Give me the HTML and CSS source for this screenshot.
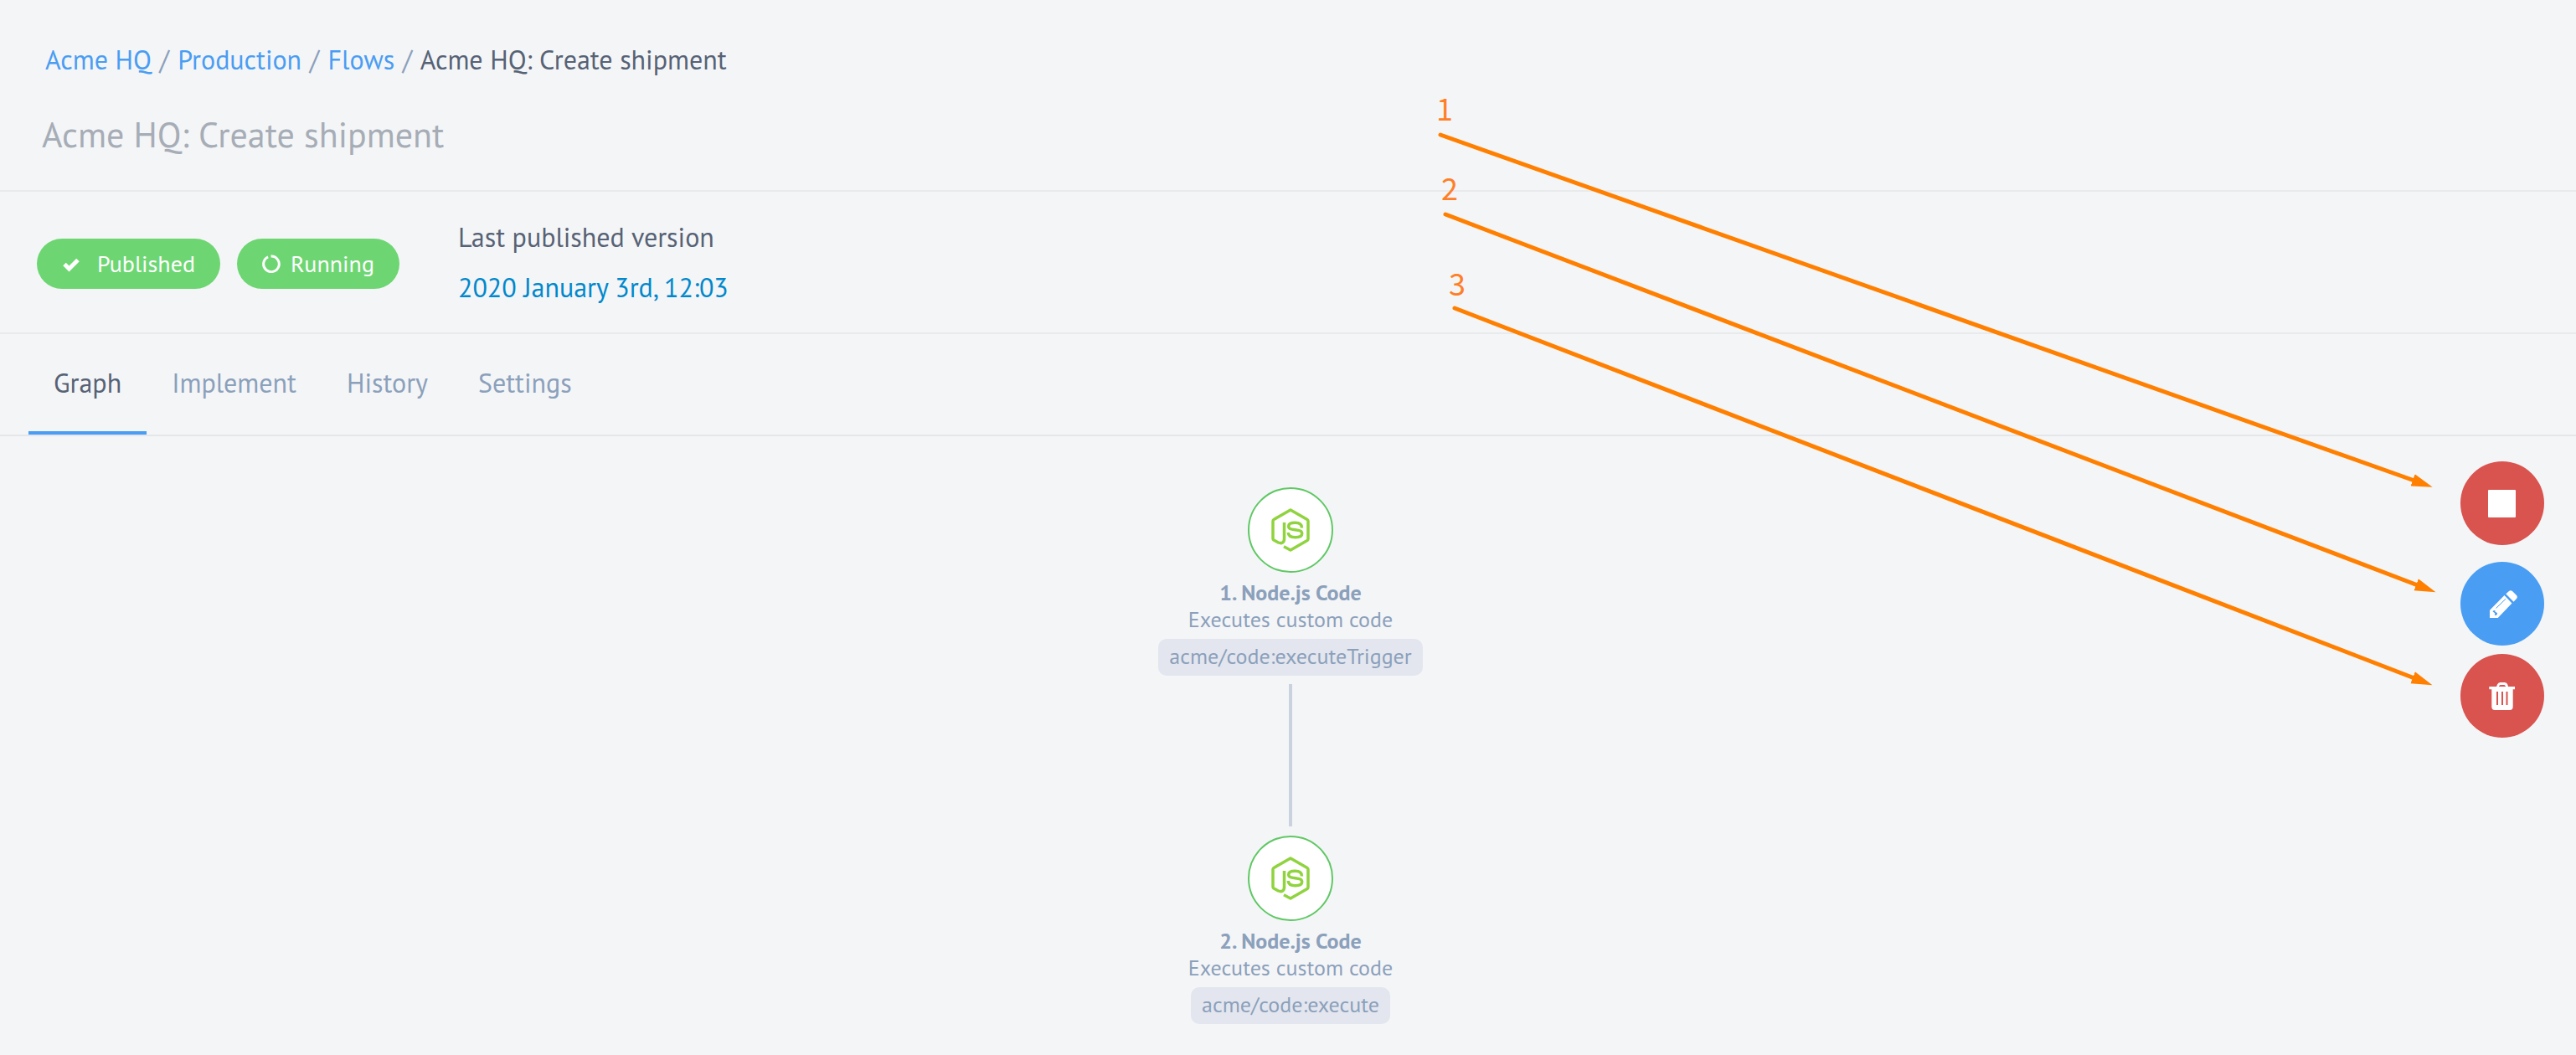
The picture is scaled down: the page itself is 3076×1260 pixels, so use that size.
FILE: index.html
```
<!DOCTYPE html>
<html lang="en">
<head>
<meta charset="utf-8">
<meta name="viewport" content="width=device-width, initial-scale=1">
<title>Acme HQ: Create shipment</title>
<link rel="stylesheet" href="styles.css">
</head>
<body>
<svg width="0" height="0" class="sprite" aria-hidden="true">
  <symbol id="icon-node" viewBox="0 0 48 52">
    <g fill="none" stroke="#90d33f" stroke-width="3.500" stroke-linejoin="round">
      <path d="M16.5 17V36.5C16.5 41 13.500 42.600 9.500 41L4 38Q3 37.300 3 36V15.500Q3 14 4 13.500L24 2L44 13.500Q45 14 45 15.500V36.500Q45 37.800 44 38.500L24 50L16 45.800"/>
      <path d="M37.500 23.500C37.500 18.500 34 17.300 29.500 17.300C25 17.300 21.700 18.700 21.700 21.500C21.700 24.500 24 25 29.500 25.700C35 26.400 37.700 27 37.700 30.200C37.700 33.500 34 34.700 30 34.700C24.500 34.700 21.300 33 21.300 29"/>
    </g>
  </symbol>
</svg>

<header class="page-header">
  <nav class="breadcrumb" aria-label="Breadcrumb">
    <a href="#">Acme HQ</a> <span class="slash">/</span> <a href="#">Production</a> <span class="slash">/</span> <a href="#">Flows</a> <span class="slash">/</span> <span class="current">Acme HQ: Create shipment</span>
  </nav>
  <h1 class="page-title">Acme HQ: Create shipment</h1>
</header>

<section class="status">
  <div class="badges">
    <span class="badge">
      <svg width="30" height="22" viewBox="0 0 30 22" aria-hidden="true"><path d="M3 11.500L8.500 17L19 6.500" fill="none" stroke="#fff" stroke-width="5"/></svg>
      Published
    </span>
    <span class="badge">
      <svg width="22" height="22" viewBox="0 0 22 22" aria-hidden="true"><path d="M9.300 2.200A9.300 9.300 0 1 1 6 3.500" transform="rotate(8 11 11)" fill="none" stroke="#fff" stroke-width="3"/></svg>
      Running
    </span>
  </div>
  <div class="version">
    <div>Last published version</div>
    <a href="#">2020 January 3rd, 12:03</a>
  </div>
</section>

<nav class="tabs" aria-label="Flow sections">
  <a class="tab active" href="#" aria-current="page">Graph</a>
  <a class="tab" href="#">Implement</a>
  <a class="tab" href="#">History</a>
  <a class="tab" href="#">Settings</a>
</nav>

<main class="graph">
  <article class="node">
    <div class="node-icon"><svg width="48" height="52" aria-hidden="true"><use href="#icon-node"/></svg></div>
    <h2 class="node-name">1. Node.js Code</h2>
    <p class="node-desc">Executes custom code</p>
    <span class="node-ref">acme/code:executeTrigger</span>
  </article>
  <div class="edge"></div>
  <article class="node">
    <div class="node-icon"><svg width="48" height="52" aria-hidden="true"><use href="#icon-node"/></svg></div>
    <h2 class="node-name">2. Node.js Code</h2>
    <p class="node-desc">Executes custom code</p>
    <span class="node-ref">acme/code:execute</span>
  </article>

  <div class="actions">
    <button class="action danger stop" type="button" aria-label="Stop">
      <svg width="36" height="36" viewBox="0 0 36 36"><rect x="1" y="2" width="33" height="33" rx="1" fill="#fff"/></svg>
    </button>
    <button class="action edit" type="button" aria-label="Edit">
      <svg width="36" height="36" viewBox="0 0 36 36">
        <path d="M3 25.700L20.500 8L29.500 17.500L12.700 35H3Z" fill="#fff"/>
        <path d="M22.300 6.300L26 2.900Q28 1.400 30 3L35 8Q36.600 10 35 12L31.500 15.700Z" fill="#fff"/>
        <path d="M10.500 23.500L22 12.300" stroke="#499df3" stroke-width="1"/>
        <path d="M6.500 27.300Q8 25.300 9.500 26.300V28Q12.500 28.500 12 30.500L10.500 32L8.800 31.500L9.300 29.600Z" fill="#499df3"/>
      </svg>
    </button>
    <button class="action danger" type="button" aria-label="Delete">
      <svg width="36" height="36" viewBox="0 0 36 36">
        <path d="M10.500 8.500L12 4.500Q13 2 15.500 2H21Q23.500 2 24.300 4.500L25.500 8.500H22.500Q22 5 20 5H16Q14 5 13.500 8.500Z" fill="#fff"/>
        <path d="M2.300 7H33V10.300H30.700V31Q30.700 35 27 35H9Q5.300 35 5.300 31V10.300H2.300Z" fill="#fff"/>
        <path d="M12 13V29M18 13V29M23.500 13V29" stroke="#d9534f" stroke-width="2"/>
      </svg>
    </button>
  </div>
</main>

<svg class="callouts" width="1400" height="900" viewBox="1676 0 1400 900">
  <defs>
    <marker id="arrowhead" markerUnits="userSpaceOnUse" markerWidth="26" markerHeight="16" refX="2" refY="8" orient="auto"><path d="M0 0.500L25 8L0 15.500Z" fill="#ff8000"/></marker>
  </defs>
  <g fill="none" stroke="#ff8000" stroke-width="5" stroke-linecap="round">
    <path d="M1720 161L2883 574" marker-end="url(#arrowhead)"/>
    <path d="M1726 256L2887 699" marker-end="url(#arrowhead)"/>
    <path d="M1737 368L2883 810" marker-end="url(#arrowhead)"/>
  </g>
  <g class="callout-number">
    <text x="1715" y="144">1</text>
    <text x="1721" y="239">2</text>
    <text x="1730" y="353">3</text>
  </g>
</svg>
</body>
</html>
```
FILE: styles.css
```
* {
  box-sizing: border-box;
}

body {
  position: relative;
  margin: 0;
  background: #f4f5f7;
  color: #566275;
  font: 32px/40px "PT Sans", Lato, sans-serif;
}

a {
  color: #499df3;
  text-decoration: none;
}

.sprite {
  position: absolute;
}

.page-header {
  padding: 51px 50px 40px;
  border-bottom: 2px solid #e8eaec;
}

.breadcrumb {
  padding-left: 4px;
}

.slash {
  margin: 0 2px 0 1px;
  color: #8ba0bb;
}

.page-title {
  margin: 44px 0 0;
  color: #a6adb6;
  font-size: 42px;
  font-weight: 400;
  line-height: 52px;
}

.status {
  display: flex;
  align-items: flex-start;
  gap: 70px;
  padding: 24px 44px;
  border-bottom: 2px solid #e8eaec;
}

.badges {
  display: flex;
  gap: 20px;
  padding-top: 32px;
}

.badge {
  display: flex;
  align-items: center;
  gap: 12px;
  height: 60px;
  padding: 0 30px;
  border-radius: 30px;
  background: #6dd672;
  color: #fff;
  font-size: 28px;
}

.version {
  line-height: 60px;
}

.version a {
  color: #0088cc;
}

.tabs {
  display: flex;
  padding: 0 34px;
  border-bottom: 2px solid #e4e6e9;
}

.tab {
  padding: 0 30px;
  border-bottom: 4px solid transparent;
  color: #8ba0bb;
  line-height: 116px;
}

.tab.active {
  border-color: #499df3;
  color: #566275;
}

.graph {
  position: relative;
  display: flex;
  flex-direction: column;
  align-items: center;
  padding: 61px 0 36px 6px;
}

.node {
  display: flex;
  flex-direction: column;
  align-items: center;
  color: #8ba0bb;
  font-size: 26px;
  line-height: 32px;
}

.node-icon {
  display: grid;
  place-items: center;
  width: 102px;
  height: 102px;
  margin-bottom: 8px;
  border: 2px solid #5fc864;
  border-radius: 50%;
  background: #fff;
}

.node-name {
  margin: 0;
  font-size: 26px;
}

.node-desc {
  margin: 0 0 7px;
}

.node-ref {
  padding: 1px 13px 3px;
  border-radius: 10px;
  background: #e3e6ee;
  line-height: 40px;
}

.edge {
  width: 4px;
  height: 170px;
  margin: 10px 0 11px;
  background: #cad1df;
}

.actions {
  position: absolute;
  top: 30px;
  right: 38px;
  display: flex;
  flex-direction: column;
  gap: 10px;
}

.action {
  display: grid;
  place-items: center;
  width: 100px;
  height: 100px;
  padding: 0;
  border: 0;
  border-radius: 50%;
  cursor: pointer;
}

.danger {
  background: #d9534f;
}

.stop {
  margin-bottom: 10px;
}

.edit {
  background: #499df3;
}

.callouts {
  position: absolute;
  top: 0;
  right: 0;
  pointer-events: none;
}

.callout-number {
  fill: #ff7f27;
  font: 36px "Noto Sans CJK SC", sans-serif;
}
```
